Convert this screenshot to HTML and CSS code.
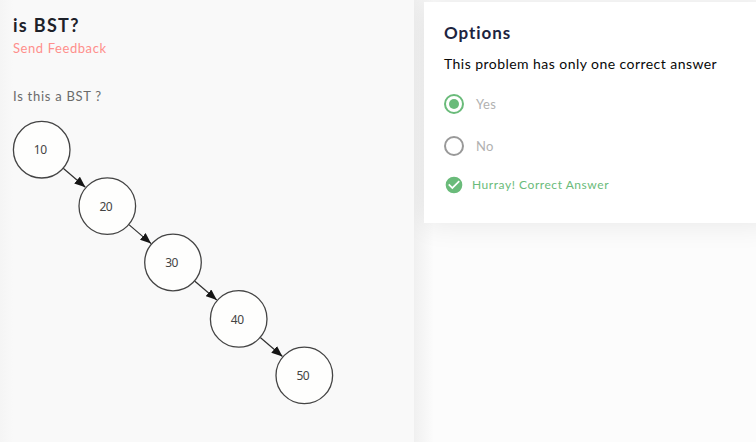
FILE: index.html
```html
<!DOCTYPE html>
<html lang="en">
<head>
<meta charset="utf-8">
<title>is BST?</title>
<link rel="stylesheet" href="styles.css">
</head>
<body>
<div class="page">
  <section class="problem">
    <h1 class="title">is BST?</h1>
    <a class="feedback">Send Feedback</a>
    <p class="question">Is this a BST ?</p>
    <svg class="tree" width="322" height="286" viewBox="12 120 322 286">
      <defs>
        <marker id="arrow" viewBox="0 0 10 8" refX="10" refY="4" markerWidth="11" markerHeight="9" markerUnits="userSpaceOnUse" orient="auto"><path d="M0 0L10 4L0 8Z" fill="#151515"/></marker>
      </defs>
      <g class="edges">
        <path d="M63.2 168.2L85.4 187.2" marker-end="url(#arrow)"/>
        <path d="M128.9 224.6L151.1 243.6" marker-end="url(#arrow)"/>
        <path d="M194.6 281L216.8 300" marker-end="url(#arrow)"/>
        <path d="M260.3 337.5L282.5 356.5" marker-end="url(#arrow)"/>
      </g>
      <g class="nodes">
        <circle cx="41.7" cy="149.7" r="28.3"/>
        <circle cx="107.3" cy="206.1" r="28.3"/>
        <circle cx="173" cy="262.5" r="28.3"/>
        <circle cx="238.7" cy="318.9" r="28.3"/>
        <circle cx="304.3" cy="375.4" r="28.3"/>
      </g>
      <g class="labels">
        <text x="40.2" y="154.4">10</text>
        <text x="105.8" y="210.9">20</text>
        <text x="171.6" y="267.3">30</text>
        <text x="237.2" y="323.8">40</text>
        <text x="302.8" y="380.3">50</text>
      </g>
    </svg>
  </section>
  <main class="side">
    <section class="card">
      <h2 class="heading">Options</h2>
      <p class="hint">This problem has only one correct answer</p>
      <div class="option"><span class="radio radio-on"></span><span class="answer">Yes</span></div>
      <div class="option"><span class="radio"></span><span class="answer">No</span></div>
      <div class="result">
        <svg width="20" height="20" viewBox="0 0 24 24"><path fill="#6abb7a" d="M12 2a10 10 0 1 0 0 20 10 10 0 0 0 0-20zm-2 15l-5-5 1.41-1.41L10 14.170l7.590-7.590L19 8l-9 9z"/></svg>
        <span class="verdict">Hurray! Correct Answer</span>
      </div>
    </section>
  </main>
</div>
</body>
</html>
```
FILE: styles.css
```css
* { box-sizing: border-box; }
body { margin: 0; font-family: Lato, sans-serif; }
h1, h2, p { margin: 0; }
.page { display: flex; width: 756px; height: 442px; overflow: hidden; background: #fcfcfc; }
.problem {
  position: relative;
  z-index: 1;
  flex: 0 0 414px;
  padding: 13px 12px 0 13px;
  background: linear-gradient(90deg, #f5f5f5, #f9f9f9 13px);
}
.title { font-size: 18px; line-height: 24px; font-weight: 700; letter-spacing: 1.3px; color: #1d2129; }
.feedback { display: block; margin-top: 1px; font-size: 13px; line-height: 20px; letter-spacing: .58px; color: #ff8f8c; }
.question { margin-top: 28px; font-size: 13px; line-height: 20px; letter-spacing: .72px; color: #6b6b6b; }
.tree { display: block; margin: 14px 0 0 -1px; }
.edges { stroke: #303030; stroke-width: 1.2; fill: none; }
.nodes { stroke: #444; stroke-width: 1.3; fill: #fefefd; }
.labels { font: 12px "Noto Sans", sans-serif; fill: #444; text-anchor: middle; letter-spacing: -.5px; }
.side {
  flex: 1 0 342px;
  padding: 2px 0 0 10px;
  background: linear-gradient(90deg, #f0f0f0, #fcfcfc 20px);
}
.card {
  width: 350px;
  height: 221px;
  padding: 19px 20px 0;
  background: #fff;
  box-shadow: 0 0 28px rgba(0, 0, 0, .09);
}
.heading { font-size: 17px; line-height: 24px; font-weight: 700; letter-spacing: .95px; color: #1d2440; }
.hint { margin-top: 8px; font-size: 14px; line-height: 22px; letter-spacing: .45px; color: #080808; white-space: nowrap; }
.option { display: flex; align-items: center; gap: 12px; height: 20px; margin-top: 22px; }
.hint + .option { margin-top: 19px; }
.radio { display: grid; place-items: center; width: 20px; height: 20px; border: 2px solid #999; border-radius: 50%; }
.radio-on { border-color: #6abb7a; }
.radio-on::after { content: ""; width: 10px; height: 10px; border-radius: 50%; background: #6abb7a; }
.answer { font-size: 13px; line-height: 20px; letter-spacing: .4px; color: #b1b1b1; }
.result { display: flex; align-items: center; gap: 8px; margin-top: 19px; }
.verdict { font-size: 12px; line-height: 20px; letter-spacing: .55px; color: #6abb7a; }
```
